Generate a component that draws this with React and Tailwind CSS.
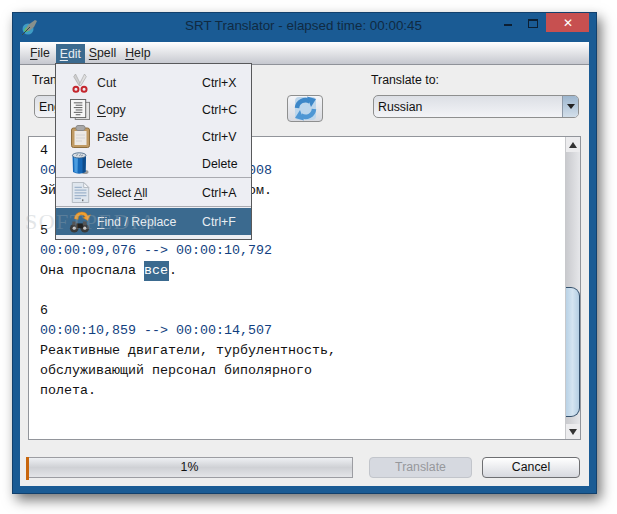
const Ul = ({ children }) => <span className="underline underline-offset-2">{children}</span>;

const Feather = () => (
  <svg width="17" height="17" viewBox="0 0 17 17">
    <circle cx="7" cy="10" r="5.5" fill="#3f9cc4" />
    <path d="M3 12 Q5 7 9 7 L9 11 Q6 14 3 12 Z" fill="#56d648" />
    <path d="M4 12 L7 6 L14 1 L16 2 L13 8 L8 12 Z" fill="#87908c" />
    <path d="M1 16 L9 8" stroke="#3a4a44" strokeWidth="1" />
  </svg>
);

const Scissors = () => (
  <svg width="18" height="20" viewBox="0 0 20 22">
    <path d="M5 1 L11 13 L9 14 L3 4 Z" fill="#cfcfcf" stroke="#9a9a9a" strokeWidth="0.6" />
    <path d="M15 1 L9 13 L11 14 L17 4 Z" fill="#e0e0e0" stroke="#9a9a9a" strokeWidth="0.6" />
    <circle cx="5.5" cy="18" r="2.8" fill="none" stroke="#c4262e" strokeWidth="2.2" />
    <circle cx="14.5" cy="18" r="2.8" fill="none" stroke="#c4262e" strokeWidth="2.2" />
  </svg>
);

const CopyIcon = () => (
  <svg width="20" height="21" viewBox="0 0 21 22">
    <rect x="5.5" y="3.5" width="15" height="18" fill="#e4e4e4" stroke="#808080" />
    <rect x="0.5" y="0.5" width="16" height="19" fill="#f6f6f6" stroke="#606060" />
    <path d="M4 4h9M6 6.5h7M4 9h9M6 11.5h7M4 14h9M6 16.5h5" stroke="#555" strokeWidth="1" />
  </svg>
);

const PasteIcon = () => (
  <svg width="19" height="23" viewBox="0 0 19 23">
    <rect x="0.5" y="3" width="18" height="19.5" rx="2" fill="#c09a62" stroke="#8c6d3c" />
    <rect x="3.5" y="6" width="12" height="14" fill="#ece9e4" />
    <path d="M5 10h9M5 13h9M5 16h6" stroke="#d4d4d4" />
    <rect x="5" y="0.5" width="9" height="5" rx="2" fill="#a8a8a8" stroke="#8a8a8a" />
  </svg>
);

const DeleteIcon = () => (
  <svg width="18" height="23" viewBox="0 0 18 23">
    <ellipse cx="14" cy="20" rx="3.5" ry="2" fill="#9a9a9a" />
    <path d="M1.5 3 L15 3 L14.5 20 Q8 23.5 2 20 Z" fill="#1668b8" />
    <path d="M3 3 L7 3 L6.5 21 L3.5 20 Z" fill="#4a9ce0" />
    <path d="M11.5 3 L15 3 L14.5 20 L11.5 21 Z" fill="#0e4c8c" />
    <ellipse cx="8.2" cy="3.4" rx="6.8" ry="2.6" fill="#d8dde2" stroke="#3f5f80" strokeWidth="0.8" />
    <path d="M5 3.5l2-1M8 4l2-1.5M10 4l2-1" stroke="#8a97a5" />
  </svg>
);

const SelectIcon = () => (
  <svg width="19" height="21" viewBox="0 0 19 23">
    <path d="M0.5 0.5 H13 L18.5 6 V22.5 H0.5 Z" fill="#dfe6ee" stroke="#b0b7be" />
    <path d="M13 0.5 V6 H18.5 Z" fill="#f6f8fa" stroke="#b0b7be" />
    <path d="M3 6h8M3 9h13M3 12h13M3 15h13M3 18h7" stroke="#9fb4cc" strokeWidth="1.4" />
    <path d="M12 19v2" stroke="#333" />
  </svg>
);

const FindIcon = () => (
  <svg width="24" height="23" viewBox="0 0 24 24">
    <path d="M6 9 Q7 2 14 2 Q19 2 20 6 L23 5 L20 11 L15 8 L17.5 7 Q16 5 13 5 Q10 5.5 10 10 Z" fill="#f0a030" stroke="#c87818" strokeWidth="0.5" />
    <circle cx="6" cy="19" r="4.5" fill="#3a3a3a" />
    <circle cx="6" cy="19" r="1.7" fill="#c8c8c8" />
    <circle cx="17" cy="19" r="4.5" fill="#3a3a3a" />
    <circle cx="17" cy="19" r="1.7" fill="#c8c8c8" />
    <rect x="8" y="14" width="7" height="5" fill="#222" />
    <rect x="4" y="12" width="4" height="4" fill="#555" />
    <rect x="15" y="12" width="4" height="4" fill="#555" />
  </svg>
);

const SwapIcon = () => (
  <svg width="29" height="25" viewBox="0 0 29 25">
    <rect x="4" y="1" width="21" height="23" rx="4" fill="#bcd6ec" />
    <path d="M6 12 A8.5 8.5 0 0 1 19 5.5" fill="none" stroke="#3d87c8" strokeWidth="4.5" />
    <path d="M16 0.5 L25 3 L20 11 Z" fill="#3d87c8" />
    <path d="M23 13 A8.5 8.5 0 0 1 10 19.5" fill="none" stroke="#4f97d4" strokeWidth="4.5" />
    <path d="M13 24.5 L4 22 L9 14 Z" fill="#4f97d4" />
  </svg>
);

const Combo = ({ label, className }) => (
  <div className={`flex h-[23px] items-stretch overflow-hidden rounded-[5px] border border-[#8e8f8f] bg-gradient-to-b from-[#dcdfe5] to-[#f3f4f7] ${className}`}>
    <span className="flex flex-1 items-center pl-1 pt-px text-[12.3px] text-[#111]">{label}</span>
    <span className="flex w-4 items-center justify-center border-l border-[#8e9aa8] bg-gradient-to-b from-[#9db6ce] to-[#d3dfea]">
      <span className="h-0 w-0 border-x-[4px] border-t-[5px] border-x-transparent border-t-[#222]" />
    </span>
  </div>
);

const MenuRow = ({ icon, label, shortcut, active }) => (
  <div className={`flex h-[27px] items-center ${active ? "bg-[#3b6a8f] text-[#e8edf2]" : "text-[#222]"}`}>
    <span className="flex w-[41px] shrink-0 justify-center pl-[7px]">{icon}</span>
    <span className="w-[105px] shrink-0 pt-px">{label}</span>
    <span className={`pt-px ${active ? "text-[#e8edf2]" : "text-[#111]"}`}>{shortcut}</span>
  </div>
);

const EditMenu = () => (
  <div className="absolute left-[35px] top-[21px] z-10 w-[197px] border border-[#58595b] bg-[#edeef3] pb-[4px] pt-[5px] text-[12.3px]">
    <MenuRow icon={<Scissors />} label="Cut" shortcut="Ctrl+X" />
    <MenuRow icon={<CopyIcon />} label={<><Ul>C</Ul>opy</>} shortcut="Ctrl+C" />
    <MenuRow icon={<PasteIcon />} label="Paste" shortcut="Ctrl+V" />
    <MenuRow icon={<DeleteIcon />} label="Delete" shortcut="Delete" />
    <div className="mb-[1px] border-t border-[#a9aab0]" />
    <MenuRow icon={<SelectIcon />} label={<>Select <Ul>A</Ul>ll</>} shortcut="Ctrl+A" />
    <div className="mb-[1px] border-t border-[#a9aab0]" />
    <MenuRow active icon={<FindIcon />} label={<><Ul>F</Ul>ind / Replace</>} shortcut="Ctrl+F" />
  </div>
);

const Scrollbar = () => (
  <div className="flex w-[15px] shrink-0 flex-col border-l border-[#c8c9cc] bg-gradient-to-r from-[#c9cace] to-[#e6e7ea]">
    <div className="flex h-[15px] items-center justify-center bg-[#ececee]">
      <span className="h-0 w-0 border-x-[4px] border-b-[6px] border-x-transparent border-b-[#333]" />
    </div>
    <div className="h-[135px]" />
    <div className="h-[130px] rounded-r-[9px] border-y border-r border-[#34506c] bg-gradient-to-r from-[#b9d2e6] via-[#d4e4f1] to-[#b5cfe4]" />
    <div className="flex-1" />
    <div className="flex h-[15px] items-center justify-center bg-[#ececee]">
      <span className="h-0 w-0 border-x-[4px] border-t-[6px] border-x-transparent border-t-[#333]" />
    </div>
  </div>
);

const blocks = [
  ["4", "00:00:06,941 --> 00:00:09,008", "Эй, она не справится со сном."],
  ["5", "00:00:09,076 --> 00:00:10,792", <>Она проспала <span className="inline-block h-[20px] bg-[#3b6a8f] pr-px align-top text-white">все</span>.</>],
  ["6", "00:00:10,859 --> 00:00:14,507", "Реактивные двигатели, турбулентность,", "обслуживающий персонал биполярного", "полета."],
];

export default function App() {
  return (
    <div className="h-[514px] w-[617px] overflow-hidden bg-white pl-[12px] pt-[12px] font-['Liberation_Sans',sans-serif]">
      <div className="flex h-[482px] w-[585px] flex-col border border-[#12406c] bg-[#1a5b94] px-[7px] pb-[7px] shadow-[4px_6px_12px_rgba(0,0,0,0.55)]">
        {/* Title bar */}
        <div className="relative flex h-[29px] shrink-0 items-center justify-center pb-[3px] pl-[4px] text-[13.4px] text-[#102a42]">
          <span className="absolute left-[1px] top-[6px]"><Feather /></span>
          <span className="pr-[6px]">SRT Translator - elapsed time: 00:00:45</span>
          <div className="absolute right-0 top-0 flex items-start">
            <span className="mr-[16px] mt-[11px] h-[2px] w-[8px] bg-[#0c1f33]" />
            <span className="mr-[8px] mt-[6px] h-[9px] w-[10px] border border-t-2 border-[#0c1f33]" />
            <span className="flex h-[19px] w-[43px] items-center justify-center bg-[#c75050] text-[12px] text-white">✕</span>
          </div>
        </div>

        {/* Client area */}
        <div className="relative flex min-h-0 flex-1 flex-col bg-[#eeeeee]">
          <div className="flex h-[23px] shrink-0 items-center border-b border-[#8f9299] bg-gradient-to-b from-white to-[#c6c8cf] pl-[10px] pt-px text-[12.3px] text-[#222]">
            <span><Ul>F</Ul>ile</span>
            <span className="ml-[6px] flex h-[20px] w-[29px] items-center justify-center self-end bg-[#3b6a8f] text-[#e8edf2]"><span><Ul>E</Ul>dit</span></span>
            <span className="ml-[4px]"><Ul>S</Ul>pell</span>
            <span className="ml-[9px]"><Ul>H</Ul>elp</span>
          </div>

          <EditMenu />

          <div className="flex shrink-0 items-start pl-[14px] pr-[10px] pt-[6px] text-[12.3px] text-[#111]">
            <div className="w-[206px]">
              <div className="-ml-[2px] h-[16px]">Translate from:</div>
              <Combo label="English" className="mt-[8px]" />
            </div>
            <div className="ml-[47px] mt-[24px] flex h-[27px] w-[36px] items-center justify-center rounded-[4px] border border-[#8e8f8f] bg-gradient-to-b from-[#f4f5f8] to-[#d8dae0]">
              <SwapIcon />
            </div>
            <div className="ml-[50px] flex-1">
              <div className="-ml-[2px] h-[16px]">Translate to:</div>
              <Combo label="Russian" className="mt-[8px]" />
            </div>
          </div>

          {/* Subtitle text */}
          <div className="ml-[8px] mr-[8px] mt-[14px] flex min-h-0 flex-1 overflow-hidden border border-[#92959b] bg-white">
            <div className="flex-1 pl-[11px] pt-[4px] font-['Liberation_Mono',monospace] text-[13.33px] leading-[20px] text-[#111]">
              {blocks.map(([num, time, ...lines], i) => (
                <div key={i} className="mb-[20px]">
                  <div>{num}</div>
                  <div className="text-[#123f80]">{time}</div>
                  {lines.map((line, j) => <div key={j}>{line}</div>)}
                </div>
              ))}
            </div>
            <Scrollbar />
          </div>

          {/* Footer */}
          <div className="flex h-[46px] shrink-0 items-start pl-[6px] pr-[9px] pt-[17px] text-[12.3px]">
            <div className="relative flex h-[21px] w-[327px] items-center justify-center border border-[#9c9da2] bg-gradient-to-b from-[#eef0f3] via-[#cfd1d5] to-[#e4e5e8] text-[#111]">
              <span className="absolute -left-px -top-[1px] h-[23px] w-[3px] bg-[#c8660c]" />
              1%
            </div>
            <div className="ml-[16px] flex h-[21px] w-[103px] items-center justify-center rounded-[4px] border border-[#c2c5cb] bg-[#d6d9e0] text-[#96989c]">Translate</div>
            <div className="ml-[10px] flex h-[21px] w-[98px] items-center justify-center rounded-[4px] border border-[#6e6f72] bg-gradient-to-b from-white to-[#d7d9df] text-[#111]">Cancel</div>
          </div>

          {/* Watermark lies over the text and the open menu */}
          <span className="pointer-events-none absolute left-[5px] top-[169px] z-20 font-['Liberation_Serif',serif] text-[22px] leading-[22px] tracking-[1.5px] text-[#a4adb5] opacity-30">SOFTPEDIA</span>
        </div>
      </div>
    </div>
  );
}
